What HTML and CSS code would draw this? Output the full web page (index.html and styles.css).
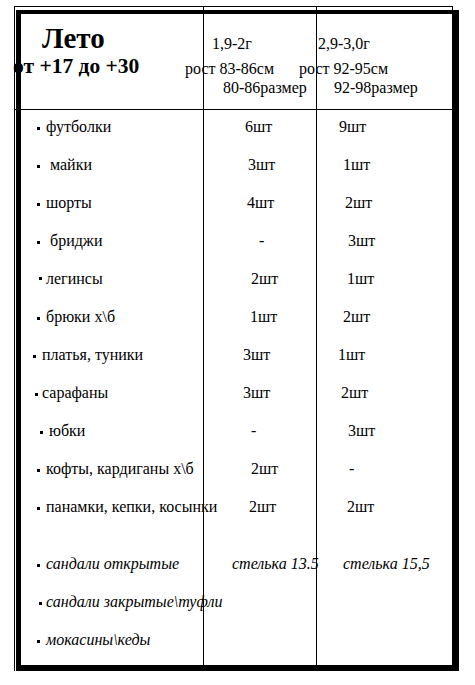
FILE: index.html
```html
<!DOCTYPE html>
<html lang="ru">
<head>
<meta charset="utf-8">
<title>Лето</title>
<link rel="stylesheet" href="styles.css">
</head>
<body>
<div class="sheet">
  <div class="table">
    <div class="cell c1 head">
      <div class="title">Лето</div>
      <div class="range">от +17 до +30</div>
    </div>
    <div class="cell c2 head">
      <div class="h1 h-age2">1,9-2г</div>
      <div class="h2 h-h2">рост 83-86см</div>
      <div class="h3 h-s2">80-86размер</div>
    </div>
    <div class="cell c3 head">
      <div class="h1 h-age3">2,9-3,0г</div>
      <div class="h2 h-h3">рост 92-95см</div>
      <div class="h3 h-s3">92-98размер</div>
    </div>

    <div class="cell c1 item"><span class="b"></span>футболки</div>
    <div class="cell c2 v o41">6шт</div>
    <div class="cell c3 v o22">9шт</div>

    <div class="cell c1 item wide"><span class="b"></span>майки</div>
    <div class="cell c2 v o44">3шт</div>
    <div class="cell c3 v o26">1шт</div>

    <div class="cell c1 item"><span class="b"></span>шорты</div>
    <div class="cell c2 v o43">4шт</div>
    <div class="cell c3 v o28">2шт</div>

    <div class="cell c1 item wide"><span class="b"></span>бриджи</div>
    <div class="cell c2 v o55">-</div>
    <div class="cell c3 v o31">3шт</div>

    <div class="cell c1 item shift2 tight high"><span class="b"></span>легинсы</div>
    <div class="cell c2 v o47">2шт</div>
    <div class="cell c3 v o30">1шт</div>

    <div class="cell c1 item"><span class="b"></span>брюки х\б</div>
    <div class="cell c2 v o46">1шт</div>
    <div class="cell c3 v o26">2шт</div>

    <div class="cell c1 item out4"><span class="b"></span>платья, туники</div>
    <div class="cell c2 v o39">3шт</div>
    <div class="cell c3 v o21">1шт</div>

    <div class="cell c1 item out2 tight"><span class="b"></span>сарафаны</div>
    <div class="cell c2 v o39">3шт</div>
    <div class="cell c3 v o24">2шт</div>

    <div class="cell c1 item in3"><span class="b"></span>юбки</div>
    <div class="cell c2 v o47">-</div>
    <div class="cell c3 v o31">3шт</div>

    <div class="cell c1 item"><span class="b"></span>кофты, кардиганы х\б</div>
    <div class="cell c2 v o47">2шт</div>
    <div class="cell c3 v o32">-</div>

    <div class="cell c1 item"><span class="b"></span>панамки, кепки, косынки</div>
    <div class="cell c2 v o45">2шт</div>
    <div class="cell c3 v o30">2шт</div>

    <div class="cell c1 gap"></div>
    <div class="cell c2 gap"></div>
    <div class="cell c3 gap"></div>

    <div class="cell c1 item it"><span class="b"></span>сандали открытые</div>
    <div class="cell c2 v it o28">стелька 13.5</div>
    <div class="cell c3 v it o26">стелька 15,5</div>

    <div class="cell c1 item it shift2 tight"><span class="b"></span>сандали закрытые\туфли</div>
    <div class="cell c2 v"></div>
    <div class="cell c3 v"></div>

    <div class="cell c1 item it"><span class="b"></span>мокасины\кеды</div>
    <div class="cell c2 v"></div>
    <div class="cell c3 v"></div>

    <div class="cell c1 fill"></div>
    <div class="cell c2 fill"></div>
    <div class="cell c3 fill"></div>
  </div>
</div>
</body>
</html>
```

FILE: styles.css
```css
html, body {
  margin: 0;
  padding: 0;
  background: #fff;
}

body {
  font-family: "Liberation Serif", "Times New Roman", serif;
  font-size: 16px;
  color: #000;
}

.sheet {
  position: relative;
  width: 475px;
  height: 685px;
  overflow: hidden;
  padding-top: 6px;
  box-sizing: border-box;
}

/* the heavy frame drawn over the table */
.sheet::after {
  content: "";
  position: absolute;
  left: 16px;
  top: 10px;
  width: 443px;
  height: 661px;
  box-sizing: border-box;
  border-style: solid;
  border-color: #000;
  border-width: 4px 6px 6px 5px;
  pointer-events: none;
}

.table {
  margin-left: 14px;
  width: 439px;
  height: 665px;
  box-sizing: border-box;
  border: 1px solid #000;
  border-bottom: 0;
  display: grid;
  grid-template-columns: 189px 113px 135px;
  grid-template-rows: 103px repeat(11, 38px) 19px repeat(3, 38px) 1fr;
}

.cell {
  box-sizing: border-box;
  white-space: nowrap;
  min-width: 0;
}

.c1, .c2 {
  border-right: 1px solid #000;
}

.head {
  border-bottom: 1px solid #000;
}

/* header, first column */
.c1.head {
  padding-top: 16px;
}

.title {
  font-weight: bold;
  font-size: 29px;
  line-height: 30px;
  padding-left: 27px;
}

.range {
  font-weight: bold;
  font-size: 21.5px;
  line-height: 27px;
  margin-left: -2px;
}

/* header, size columns */
.c2.head, .c3.head {
  padding-top: 24px;
}

.h1 { line-height: 26px; }
.h2 { line-height: 24px; }
.h3 { line-height: 14px; }

.h-age2 { padding-left: 8px; }
.h-h2 { margin-left: -19px; }
.h-s2 { padding-left: 19px; }

.h-age3 { padding-left: 1px; }
.h-h3 { margin-left: -18px; }
.h-s3 { padding-left: 17px; }

/* body rows */
.item, .v {
  line-height: 33px;
}

.item {
  padding-left: 22px;
}

.b {
  display: inline-block;
  width: 3px;
  height: 3px;
  background: #000;
  margin-bottom: 2px;
  margin-right: 6px;
}

.item.wide .b { margin-right: 10px; }
.item.tight .b { margin-right: 4px; }
.item.shift2 { padding-left: 24px; }
.item.out4 { padding-left: 18px; }
.item.out2 { padding-left: 20px; }
.item.in3 { padding-left: 25px; }
.item.high .b { margin-bottom: 4px; }

.it {
  font-style: italic;
}

/* horizontal offsets of the quantities */
.o21 { padding-left: 21px; }
.o22 { padding-left: 22px; }
.o24 { padding-left: 24px; }
.o26 { padding-left: 26px; }
.o28 { padding-left: 28px; }
.o30 { padding-left: 30px; }
.o31 { padding-left: 31px; }
.o32 { padding-left: 32px; }
.o39 { padding-left: 39px; }
.o41 { padding-left: 41px; }
.o43 { padding-left: 43px; }
.o44 { padding-left: 44px; }
.o45 { padding-left: 45px; }
.o46 { padding-left: 46px; }
.o47 { padding-left: 47px; }
.o55 { padding-left: 55px; }
```
